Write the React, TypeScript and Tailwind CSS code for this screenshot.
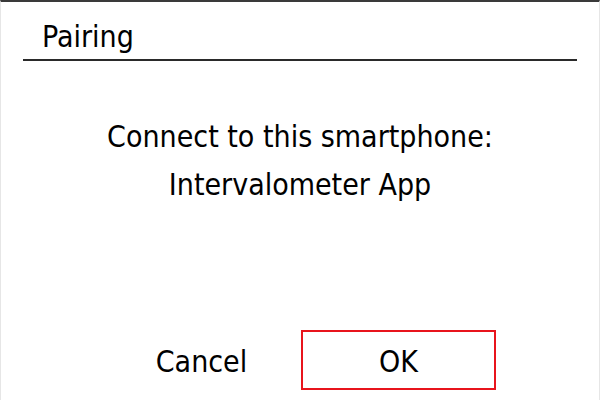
const FONT = "font-['DejaVu_Sans_Condensed','DejaVu_Sans',sans-serif]";

// 페어링 확인 화면 — 제목, 안내 문구, 취소/확인 버튼.
export default function App() {
  return (
    <div
      className={`${FONT} flex h-[400px] w-[600px] flex-col border-t-2 border-r border-l border-t-[#3a3a3a] border-r-[#e6e6e6] border-l-[#e6e6e6] bg-white text-black`}
    >
      <div className="mx-[22px] mt-[19px] border-b-2 border-[#2a2a2a] pb-[6px]">
        <h1 className="pl-[19px] text-[30px] leading-[32px]">Pairing</h1>
      </div>

      <div className="mt-[52px] flex flex-col items-center text-[30px] leading-[48px]">
        <p>Connect to this smartphone:</p>
        <p>Intervalometer App</p>
      </div>

      <div className="mt-auto mb-[10px] flex justify-center gap-[2px]">
        <button
          type="button"
          className="h-[60px] w-[195px] border-2 border-transparent pt-[2px] text-[30px] leading-[56px]"
        >
          Cancel
        </button>
        <button
          type="button"
          className="h-[60px] w-[195px] border-2 border-[#e8141c] pt-[2px] text-[30px] leading-[56px]"
        >
          OK
        </button>
      </div>
    </div>
  );
}
